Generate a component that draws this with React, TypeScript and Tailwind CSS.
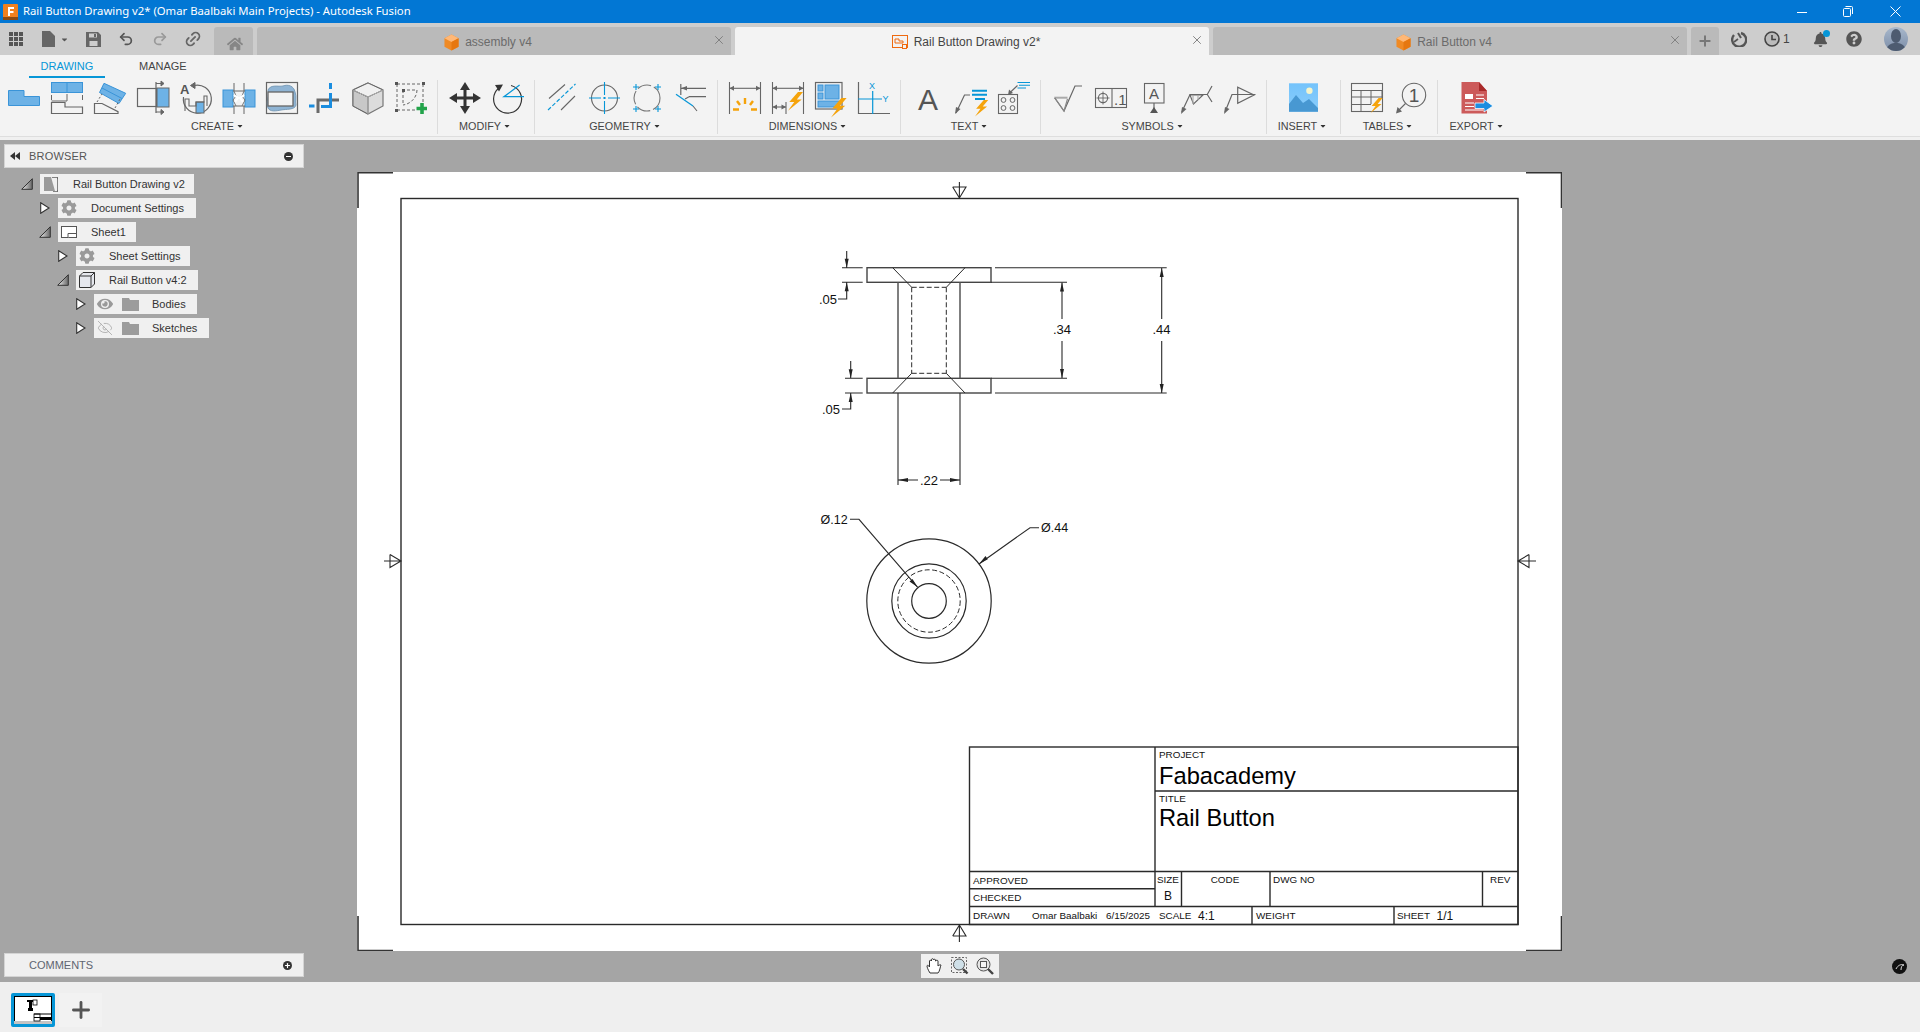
import React from "react";
import { Undo2, Redo2, Link2, EyeOff, X, Plus } from "lucide-react";
import { FaCog, FaEye, FaHome, FaBell, FaQuestionCircle, FaCaretDown } from "react-icons/fa";

const G = "#666";
const B = "#6db2e6";
const BL = "#0696d7";
const O = "#f5a30b";

function Bolt({ x, y, s = 1 }: { x: number; y: number; s?: number }) {
  return <polygon transform={`translate(${x} ${y}) scale(${s})`} points="8,0 1,8 5,8 0,15 11,6 7,6 12,0" fill={O} stroke="none" />;
}

function I({ children }: { children: React.ReactNode }) {
  return (
    <svg viewBox="0 0 32 32" className="w-8 h-8 shrink-0 overflow-visible" fill="none" stroke={G} strokeWidth="1">
      {children}
    </svg>
  );
}

const create = [
  <polygon key="" points="0.5,8.5 16,8.5 16,14.5 31.5,14.5 31.5,23.5 0.5,23.5" fill={B} stroke="#3a94d8" />,
  <g key="">
    <rect x="0.5" y="0.5" width="31" height="10" fill={B} stroke="#3a94d8" />
    <path d="M16 0.5V10.5" stroke="#3a94d8" />
    <path d="M0.5 13V18M16 12V19M31.5 13V18M0.5 19H16" />
    <path d="M0.5 20.5H14V25H31.5V31.5H0.5Z" strokeWidth="1.2" />
  </g>,
  <g key="">
    <polygon points="10,1.3 31.7,11.3 25,21.5 5.5,10.5" fill={B} stroke="#3a94d8" />
    <path d="M8 6 L28 16.5" stroke="#3a94d8" />
    <path d="M0.5 31.5V21.5H8L24 29.7V31.5Z" strokeWidth="1.2" />
    <path d="M3 20L8 12M21 26L26 17" strokeDasharray="2 2" />
  </g>,
  <g key="">
    <rect x="0.5" y="6.5" width="19" height="18" strokeWidth="1.2" />
    <rect x="20" y="6" width="12" height="19" fill={B} />
    <path d="M19 0V31M19 1.5H26M19 30H26" strokeWidth="1.2" />
    <path d="M24 -1L27 1.5L24 4ZM24 27.5L27 30L24 32.5Z" fill={G} />
  </g>,
  <g key="">
    <text x="0" y="12" fontSize="13" fontWeight="700" fill="#555" stroke="none" fontFamily="Liberation Sans">A</text>
    <path d="M14 3.5A14 14 0 1 1 3.5 15" strokeWidth="1.2" />
    <path d="M15 0.5L10.5 3.5L15 6.5Z" fill={G} />
    <rect x="16" y="20" width="8" height="11" fill={B} />
    <path d="M5 29V17H9V24H16V20H24V14H27V24" strokeWidth="1.1" />
  </g>,
  <g key="">
    <rect x="0" y="8" width="10" height="17" fill={B} stroke="#3a94d8" />
    <rect x="22" y="8" width="10" height="17" fill={B} stroke="#3a94d8" />
    <path d="M11 1V9M21 1V9M11 24V32M21 24V32" />
    <path d="M10 9H22M10 24H22" />
    <path d="M11 9L13 14L10 18L13 24M21 9L19 14L22 18L19 24" stroke="#777" />
    <path d="M11 13L15 16L12 20M21 13L17 16L20 20" stroke="#fff" strokeWidth="2" />
  </g>,
  <g key="">
    <rect x="0.5" y="0.5" width="31" height="31" strokeWidth="1.2" />
    <path d="M2 8C5 2 12 5 17 4C22 2 28 4 29 10C31 15 29 19 30 23C29 28 20 27 15 28C10 29 4 30 2 26C0 20 3 14 2 8Z" fill="#8fb4d4" stroke="#7a9cb8" />
    <rect x="2" y="10" width="25" height="14" fill="#f3f3f3" strokeWidth="1.3" />
  </g>,
  <g key="">
    <path d="M30 18H9V31" stroke="#6a6a6a" strokeWidth="3" />
    <path d="M21.5 1V7M21.5 11V24.5H12M0 24H5.5" stroke="#1a8ddf" strokeWidth="3" />
  </g>,
  <g key="">
    <polygon points="16,1 31,8 31,24 16,32 1,24 1,8" fill="#dcdcdc" stroke="#777" strokeWidth="1.2" />
    <polygon points="1,8 16,15 16,32 1,24" fill="#c8c8c8" />
    <polygon points="16,1 31,8 16,15 1,8" fill="#f0f0f0" />
    <path d="M1 8L16 15L31 8M16 15V32" stroke="#aaa" />
  </g>,
  <g key="">
    <path d="M2 2H28M2 2V28M2 28H22M28 2V20" strokeDasharray="3 2" strokeWidth="1" />
    <path d="M7 8H22M8 8V22M22 8C22 15 16 22 8 23" strokeDasharray="3 2" />
    <g fill="#555" stroke="none">
      <rect x="0" y="0" width="3" height="3" /><rect x="27" y="0" width="3" height="3" /><rect x="0" y="27" width="3" height="3" />
      <rect x="7" y="7" width="3" height="3" />
    </g>
    <path d="M27 21V32M21.5 26.5H32" stroke="#22a34a" strokeWidth="3.6" />
  </g>,
];

const modify = [
  <g key="">
    <path d="M16 4V28M4 16H28" stroke="#333" strokeWidth="3" />
    <path d="M16 0L21 8H11ZM16 32L21 24H11ZM0 16L8 11V21ZM32 16L24 11V21Z" fill="#333" stroke="none" />
  </g>,
  <g key="">
    <path d="M7 6A14 14 0 1 0 19 3.5" stroke="#333" strokeWidth="1.2" />
    <path d="M3 3L11 2.5L7 9.5Z" fill="#333" stroke="none" />
    <path d="M27.6 3L12 14.7H32" stroke={BL} strokeWidth="1.3" />
  </g>,
];

const geometry = [
  <g key="">
    <path d="M2 28L29.5 2" stroke={BL} strokeWidth="1.1" strokeDasharray="4 2" />
    <path d="M3 16.5L19 2.5M15 28L29 14" strokeWidth="1.1" />
  </g>,
  <g key="">
    <circle cx="15.5" cy="16" r="13" strokeWidth="1.1" />
    <path d="M15.5 0V13M15.5 15V17M15.5 19V32M0 16H12M14 16H17M19 16H31" stroke={BL} strokeWidth="1.1" />
  </g>,
  <g key="">
    <circle cx="15" cy="16" r="13" strokeDasharray="14 3" strokeWidth="1.1" stroke="#777" />
    <path d="M26 2V8M23 5H29M26 24V30M23 27H29M4 2V8M1 5H7M4 24V30M1 27H7" stroke={BL} strokeWidth="1.1" />
  </g>,
  <g key="">
    <path d="M6 6.3H31M14 14.7H31M5.8 2V13" strokeWidth="1.2" />
    <path d="M6 6.3L12 4V8.6Z" fill={G} stroke="none" />
    <path d="M1 12.3L18 24" stroke={BL} strokeWidth="1.2" />
    <path d="M14 14.7L10 17M18 24L22 29" strokeWidth="1.1" />
  </g>,
];

function Arrows({ y, x2 = 31.5 }: { y: number; x2?: number }) {
  return (
    <>
      <path d={`M0.5 ${y}H${x2}`} strokeWidth="1.1" />
      <path d={`M0.5 ${y}L5 ${y - 2.5}V${y + 2.5}ZM${x2} ${y}L${x2 - 4.5} ${y - 2.5}V${y + 2.5}Z`} fill={G} stroke="none" />
    </>
  );
}

const dimensions = [
  <g key="">
    <path d="M0.5 0V32M31.5 0V32" strokeWidth="1.1" />
    <Arrows y={6.3} />
    <path d="M16 16V22M8 19L11 23M24 19L21 23M4 27.5H10M22 27.5H28" stroke={O} strokeWidth="2.4" />
  </g>,
  <g key="">
    <path d="M0.5 0V32M31.5 0V32M14 20V32" strokeWidth="1.1" />
    <Arrows y={6.3} />
    <Arrows y={25} x2={14} />
    <Bolt x={16} y={10} s={1.25} />
  </g>,
  <g key="">
    <rect x="0.5" y="0.5" width="26.5" height="26.5" fill="#f3f3f3" strokeWidth="1.2" />
    <rect x="3" y="3" width="5" height="6" fill={B} stroke="#3a94d8" />
    <rect x="3" y="11" width="5" height="6" fill={B} stroke="#3a94d8" />
    <rect x="10" y="3" width="14" height="14" fill={B} stroke="#3a94d8" />
    <rect x="3" y="19" width="21" height="6" fill={B} stroke="#3a94d8" />
    <Bolt x={16} y={16} s={1.3} />
  </g>,
  <g key="">
    <path d="M0.5 0V31.5H32" strokeWidth="1.2" />
    <path d="M14.7 9V32M0 17H24" stroke={BL} strokeWidth="1.2" />
    <text x="11" y="7" fontSize="9" fill={BL} stroke="none" fontFamily="Liberation Sans">X</text>
    <text x="24.5" y="20" fontSize="9" fill={BL} stroke="none" fontFamily="Liberation Sans">Y</text>
  </g>,
];

const textIcons = [
  <text key="" x="16" y="27.5" textAnchor="middle" fontSize="30" fill="#555" stroke="none" fontFamily="Liberation Sans">A</text>,
  <g key="">
    <path d="M1 31L9.5 13H15" strokeWidth="1.2" />
    <path d="M0 32L1 25L5.5 27Z" fill={G} stroke="none" />
    <path d="M17 8.7H32M17 12.8H32M20 17H30" stroke={BL} strokeWidth="2" />
    <Bolt x={20} y={18} s={1.1} />
  </g>,
  <g key="">
    <rect x="0.5" y="12.5" width="19" height="19" strokeWidth="1.1" />
    <circle cx="5.5" cy="18" r="2.4" /><circle cx="14.5" cy="18" r="2.4" /><circle cx="5.5" cy="26" r="2.4" /><circle cx="14.5" cy="26" r="2.4" />
    <path d="M11.5 11L19.5 3.5" strokeWidth="1.1" />
    <path d="M10 13L11 7.5L15 11Z" fill={G} stroke="none" />
    <path d="M19.5 0.5H32M21 3.2H32M19.5 6H28" stroke={BL} strokeWidth="1.1" />
  </g>,
];

const symbols = [
  <g key="">
    <path d="M2.3 15.7H15.5" stroke="#aaa" strokeWidth="2" />
    <path d="M2.8 16L12 29L23 4H30" strokeWidth="1.2" />
    <path d="M2.8 16L12 29L15.5 17" stroke="#888" strokeWidth="1.2" />
  </g>,
  <g key="">
    <rect x="0.5" y="6.5" width="31" height="19" strokeWidth="1.1" />
    <path d="M17 6.5V25.5" strokeWidth="1.1" />
    <circle cx="8" cy="16" r="4.6" strokeWidth="1.1" />
    <path d="M8 9.5V22.5M1.5 16H14.5" strokeWidth="0.9" />
    <text x="19" y="23" fontSize="15" fill="#555" stroke="none" fontFamily="Liberation Sans">.1</text>
  </g>,
  <g key="">
    <rect x="6.5" y="1.5" width="19.5" height="19.5" strokeWidth="1.1" />
    <text x="16" y="17" textAnchor="middle" fontSize="15" fill="#555" stroke="none" fontFamily="Liberation Sans">A</text>
    <path d="M16 21V27" strokeWidth="1.2" />
    <path d="M16 25L20 31H12Z" fill="#555" stroke="none" />
  </g>,
  <g key="">
    <path d="M0.8 30L9 12.5H26.3L31 4M26.3 12.5L31 20" strokeWidth="1.2" />
    <path d="M0 32L1 25L5.5 27Z" fill={G} stroke="none" />
    <path d="M9 13L22 13L12.5 22Z" strokeWidth="1.1" />
    <path d="M12 13V22M17 13V18" strokeWidth="1.1" stroke="#aaa" />
  </g>,
  <g key="">
    <path d="M1 30L8 12.5H31.5" strokeWidth="1.2" />
    <path d="M0 32L1 25L5.5 27Z" fill={G} stroke="none" />
    <path d="M13.7 5.3V21.3L30 13Z" strokeWidth="1.2" />
  </g>,
];

const insert = [
  <g key="">
    <defs>
      <linearGradient id="sky" x1="0" y1="0" x2="0" y2="1">
        <stop offset="0" stopColor="#74c3fb" />
        <stop offset="1" stopColor="#8acdfb" />
      </linearGradient>
    </defs>
    <rect x="1" y="1.3" width="29" height="28.4" fill="url(#sky)" stroke="none" />
    <circle cx="21.4" cy="8.7" r="3.2" fill="#f4f4cc" stroke="none" />
    <path d="M1 22L8 13L15 21L21 17L30 26V29.7H1Z" fill="#4898d2" stroke="none" />
  </g>,
];

const tables = [
  <g key="">
    <rect x="0.5" y="1.5" width="31" height="28" strokeWidth="1.1" />
    <path d="M0.5 8.5H31.5M0.5 15H31.5M0.5 22.5H20M10 8.5V29.5M20 8.5V22M31 8.5V16" strokeWidth="1" />
    <Bolt x={19.6} y={16} s={1} />
  </g>,
  <g key="">
    <circle cx="20" cy="13" r="11.7" strokeWidth="1.1" />
    <text x="20" y="20" textAnchor="middle" fontSize="19" fill="#555" stroke="none" fontFamily="Liberation Sans">1</text>
    <path d="M11.5 21.5L4 29" strokeWidth="1.1" />
    <path d="M2 31.5L3.5 25L8 29.5Z" fill={G} stroke="none" />
  </g>,
];

const exportIcons = [
  <g key="">
    <polygon points="0.5,0 18,0 26,9 26,31.5 0.5,31.5" fill="#cc5a5a" stroke="none" />
    <polygon points="18,0 26,9 18,9" fill="#a92a2a" stroke="none" />
    <rect x="4" y="12" width="8" height="5" fill="#fff" stroke="none" />
    <path d="M15 13H23M15 16.5H23M4 21H13M4 24.5H13M4 28H22" stroke="#fff" strokeWidth="1.1" />
    <path d="M14 21H23V17.5L32 24L23 30V26.5H14Z" fill="#1b8de0" stroke="#fff" strokeWidth="0.8" />
  </g>,
];

function Group({ icons, label, w, pad, sep = true }: { icons: React.ReactNode[]; label: string; w: string; pad: string; sep?: boolean }) {
  return (
    <div className={`flex flex-col h-[54px] border-r shrink-0 ${sep ? "border-[#dcdcdc]" : "border-transparent"} ${w}`}>
      <div className={`flex gap-[11px] h-[32px] shrink-0 mt-[2px] ${pad}`}>
        {icons.map((ic, i) => (
          <I key={i}>{ic}</I>
        ))}
      </div>
      <div className="mt-[5px] -ml-[2px] flex items-center justify-center gap-[2px] text-[10.8px] leading-[14px] text-[#444]">
        {label}
        <FaCaretDown className="w-[8px] h-[8px] text-[#333]" />
      </div>
    </div>
  );
}

function Cube() {
  return (
    <svg viewBox="0 0 16 18" className="w-[15px] h-[17px] shrink-0">
      <polygon points="8,0.5 15.5,4.5 15.5,13.5 8,17.5 0.5,13.5 0.5,4.5" fill="#f08a24" />
      <polygon points="8,0.5 15.5,4.5 8,8.5 0.5,4.5" fill="#ffb877" />
      <polygon points="8,8.5 15.5,4.5 15.5,13.5 8,17.5" fill="#e67710" />
    </svg>
  );
}

function Tab({ icon, label, active, w }: { icon: React.ReactNode; label: string; active?: boolean; w: string }) {
  return (
    <div className={`relative flex items-center justify-center gap-[6px] h-[28px] rounded-t-[3px] text-[12px] pr-[12px] pt-[2px] ${w} ${active ? "bg-[#f3f3f3] text-[#444]" : "bg-[#bababa] text-[#6b6b6b]"}`}>
      {icon}
      <span>{label}</span>
      <X className="absolute right-[5px] top-[6px] w-[14px] h-[14px] text-[#7d7d7d]" strokeWidth={1.6} />
    </div>
  );
}

const T = { fontFamily: "Liberation Sans, sans-serif" };

function ArrowDown({ x, y }: { x: number; y: number }) {
  return <path d={`M${x} ${y}L${x - 2} ${y - 9}H${x + 2}Z`} fill="#222" stroke="none" />;
}
function ArrowUp({ x, y }: { x: number; y: number }) {
  return <path d={`M${x} ${y}L${x - 2} ${y + 9}H${x + 2}Z`} fill="#222" stroke="none" />;
}

function Sheet() {
  const small = { fontSize: 9.9, fill: "#111", stroke: "none", ...T } as const;
  return (
    <svg viewBox="357 172 1205 779" className="w-[1205px] h-[779px] block" fill="none" stroke="#2a2a2a" strokeWidth="1.2" style={T}>
      {/* corners */}
      <path d="M358 208V172.7H393M1526 172.7H1561.5V208M358 916V950.5H393M1526 950.5H1561.5V916" stroke="#333" strokeWidth="1.6" />
      <rect x="401" y="198.5" width="1117" height="726" strokeWidth="1.4" />

      {/* centring marks */}
      <g strokeWidth="1.1">
        <path d="M959.4 182V198M952.7 187L959.4 198L966 187H952.7" />
        <path d="M959.4 942V925M952.7 936L959.4 925L966 936H952.7" />
        <path d="M384 561H401M390 554.5L401 561L390 567.5V554.5" />
        <path d="M1536 561H1518M1529 554.5L1518 561L1529 567.5V554.5" />
      </g>

      {/* side view */}
      <rect x="867" y="267.7" width="124" height="14.6" stroke="#444" strokeWidth="1.4" />
      <rect x="867" y="378.3" width="124" height="14.7" stroke="#444" strokeWidth="1.4" />
      <path d="M898 282.3V378.3M960 282.3V378.3" strokeWidth="1.5" stroke="#555" />
      <path d="M911.7 287.3V373.3M946.3 287.3V373.3M911.7 287.3H946.3M911.7 373.3H946.3" strokeDasharray="5 2.5" strokeWidth="1" />
      <path d="M892.7 267.7L911.7 287.3M965 267.7L946.3 287.3M892.7 393L911.7 373.3M965 393L946.3 373.3" strokeWidth="1" />

      {/* dims */}
      <g strokeWidth="1.1">
        <path d="M995 267.7H1166.7M995 393H1166.7M991 282.3H1067M991 378.3H1067" />
        <path d="M1161.7 268V319M1161.7 341V393M1062 282.5V319M1062 341V378" />
        <path d="M842 267.7H862.7M842 282.3H862.7M846.7 251V267.7M846.7 282.3V299H838" />
        <path d="M845 378.3H862.7M845 393H862.7M850.7 361V378.3M850.7 393V409H842" />
        <path d="M898 393V485M960 393V485M898 480H918M940 480H960" />
      </g>
      <ArrowUp x={1161.7} y={268} />
      <ArrowDown x={1161.7} y={393} />
      <ArrowUp x={1062} y={282.5} />
      <ArrowDown x={1062} y={378} />
      <ArrowDown x={846.7} y={267.7} />
      <ArrowUp x={846.7} y={282.3} />
      <ArrowDown x={850.7} y={378.3} />
      <ArrowUp x={850.7} y={393} />
      <path d="M898 480L908 478V482ZM960 480L950 478V482Z" fill="#222" stroke="none" />
      <g fontSize="13" fill="#111" stroke="none">
        <text x="1161.5" y="334" textAnchor="middle">.44</text>
        <text x="1062" y="334" textAnchor="middle">.34</text>
        <text x="828" y="303.5" textAnchor="middle">.05</text>
        <text x="831" y="414" textAnchor="middle">.05</text>
        <text x="929" y="485" textAnchor="middle">.22</text>
      </g>

      {/* top view */}
      <circle cx="929" cy="601" r="62.2" />
      <circle cx="929" cy="601" r="37.2" />
      <circle cx="929" cy="601" r="31.2" strokeDasharray="5 2.5" strokeWidth="1" />
      <circle cx="929" cy="601" r="17.3" />
      <path d="M850 519.3H859L917.7 587.3M979 564L1030 527.7H1039" strokeWidth="1.1" />
      <path d="M917.7 587.3L909.5 581.5L912.5 578.9ZM979 564L985.5 556L987.8 559.2Z" fill="#222" stroke="none" />
      <g fontSize="12.5" fill="#111" stroke="none">
        <text x="820.5" y="524">Ø.12</text>
        <text x="1041" y="532">Ø.44</text>
      </g>

      {/* title block */}
      <g strokeWidth="1.4">
        <rect x="969.5" y="747" width="548.5" height="177.5" />
        <path d="M1155 747V906.5M969.5 871.5H1518M1155 791H1518M969.5 888.7H1155M969.5 906.5H1518M1181.5 871.5V906.5M1270 871.5V906.5M1482.5 871.5V906.5M1252 906.5V924.5M1394 906.5V924.5" />
      </g>
      <text x="1159" y="757.5" {...small}>PROJECT</text>
      <text x="1159" y="784" fontSize="23.7" fill="#000" stroke="none">Fabacademy</text>
      <text x="1159" y="801.5" {...small}>TITLE</text>
      <text x="1159" y="825.5" fontSize="23.7" fill="#000" stroke="none">Rail Button</text>
      <text x="973" y="884" {...small}>APPROVED</text>
      <text x="973" y="901" {...small}>CHECKED</text>
      <text x="973" y="919" {...small}>DRAWN</text>
      <text x="1032" y="919" {...small}>Omar Baalbaki</text>
      <text x="1106" y="919" {...small}>6/15/2025</text>
      <text x="1157" y="882.5" {...small}>SIZE</text>
      <text x="1164" y="900" fontSize="12" fill="#111" stroke="none">B</text>
      <text x="1225" y="882.5" textAnchor="middle" {...small}>CODE</text>
      <text x="1273" y="882.5" {...small}>DWG NO</text>
      <text x="1490" y="882.5" {...small}>REV</text>
      <text x="1159" y="919" {...small}>SCALE</text>
      <text x="1198" y="920" fontSize="12" fill="#111" stroke="none">4:1</text>
      <text x="1256" y="919" {...small}>WEIGHT</text>
      <text x="1397" y="919" {...small}>SHEET</text>
      <text x="1436.5" y="920" fontSize="12" fill="#111" stroke="none">1/1</text>
    </svg>
  );
}

function Collapse() {
  return (
    <svg viewBox="0 0 12 12" className="w-3 h-3 ml-[1px]">
      <defs>
        <linearGradient id="tri" x1="0" y1="0" x2="1" y2="0">
          <stop offset="0" stopColor="#eee" />
          <stop offset="1" stopColor="#666" />
        </linearGradient>
      </defs>
      <polygon points="0.7,11.3 11.3,0.7 11.3,11.3" fill="url(#tri)" stroke="#333" strokeWidth="1" />
    </svg>
  );
}
function Expand() {
  return (
    <svg viewBox="0 0 10 12" className="w-[10px] h-3 ml-[2px]">
      <polygon points="0.7,0.7 9,6 0.7,11.3" fill="#fff" stroke="#333" strokeWidth="1.1" />
    </svg>
  );
}
function Folder() {
  return (
    <svg viewBox="0 0 17 13" className="w-[17px] h-[13px] shrink-0">
      <path d="M0 0H7L8 2H17V13H0Z" fill="#9c9c9c" />
    </svg>
  );
}

const Gear = () => <FaCog className="w-4 h-4 text-[#9a9a9a] shrink-0" />;

type Row = { pl: string; open: boolean; w: string; gap: string; icon: React.ReactNode; label: string };
const rows: Row[] = [
  {
    pl: "pl-[20px]", open: true, w: "w-[154px]", gap: "gap-[14px] pl-[4px]", label: "Rail Button Drawing v2",
    icon: (
      <svg viewBox="0 0 15 15" className="w-[15px] h-[15px] shrink-0">
        <polygon points="0,0 7,0 11,14 0,14" fill="#9a9a9a" />
        <path d="M8 0.5H13.5V14.5H9M13.5 0V2M13.5 13V15" stroke="#666" fill="none" strokeWidth="0.8" />
      </svg>
    ),
  },
  { pl: "pl-[38px]", open: false, w: "w-[138px]", gap: "gap-[14px] pl-[3px]", label: "Document Settings", icon: <Gear /> },
  {
    pl: "pl-[38px]", open: true, w: "w-[78px]", gap: "gap-[14px] pl-[3px]", label: "Sheet1",
    icon: (
      <svg viewBox="0 0 16 12" className="w-4 h-3 shrink-0" fill="#fff" stroke="#555">
        <rect x="0.5" y="0.5" width="15" height="11" />
        <path d="M7 11.5V7.5H15.5" />
      </svg>
    ),
  },
  { pl: "pl-[56px]", open: false, w: "w-[114px]", gap: "gap-[14px] pl-[3px]", label: "Sheet Settings", icon: <Gear /> },
  {
    pl: "pl-[56px]", open: true, w: "w-[122px]", gap: "gap-[14px] pl-[3px]", label: "Rail Button v4:2",
    icon: (
      <svg viewBox="0 0 16 16" className="w-4 h-4 shrink-0" fill="#e6e8ee" stroke="#333">
        <path d="M0.5 4L4 0.5H15.5V12L12 15.5H0.5Z" />
        <path d="M0.5 4H12V15.5M12 4L15.5 0.5" />
      </svg>
    ),
  },
  {
    pl: "pl-[74px]", open: false, w: "w-[103px]", gap: "gap-[13px] pl-[3px]", label: "Bodies",
    icon: (
      <div className="flex items-center gap-[9px]">
        <FaEye className="w-4 h-4 text-[#9a9a9a] shrink-0" />
        <Folder />
      </div>
    ),
  },
  {
    pl: "pl-[74px]", open: false, w: "w-[115px]", gap: "gap-[13px] pl-[3px]", label: "Sketches",
    icon: (
      <div className="flex items-center gap-[9px]">
        <EyeOff className="w-4 h-4 text-[#aaa] shrink-0" strokeWidth={1.3} />
        <Folder />
      </div>
    ),
  },
];

export default function App() {
  return (
    <div className="flex flex-col w-[1920px] h-[1032px] overflow-hidden" style={T}>
      {/* title bar */}
      <div className="flex items-center h-[23px] bg-[#0277d4] text-white shrink-0">
        <svg viewBox="0 0 15 16" className="w-[15px] h-4 ml-[3px] shrink-0">
          <rect width="15" height="16" rx="1" fill="#f0801e" />
          <rect y="13" width="15" height="3" fill="#8a4a12" />
          <path d="M5 3H11V5H7V7H10.5V9H7V12H5Z" fill="#fff" />
        </svg>
        <span className="ml-[5px] text-[11.3px]" style={{ fontFamily: "Noto Sans, sans-serif" }}>
          Rail Button Drawing v2* (Omar Baalbaki Main Projects) - Autodesk Fusion
        </span>
        <div className="ml-auto flex items-center gap-[36px] pr-[19px]">
          <svg viewBox="0 0 10 10" className="w-[10px] h-[10px]" stroke="#fff" fill="none"><path d="M0 5.5H10" /></svg>
          <svg viewBox="0 0 10 11" className="w-[10px] h-[11px]" stroke="#fff" fill="none"><rect x="0.5" y="2.5" width="7" height="8" rx="1" /><path d="M2.5 0.5H8.5Q9.5 0.5 9.5 1.5V8" /></svg>
          <svg viewBox="0 0 11 11" className="w-[11px] h-[11px] ml-[1px]" stroke="#fff" fill="none"><path d="M0.5 0.5L10.5 10.5M10.5 0.5L0.5 10.5" /></svg>
        </div>
      </div>

      {/* tab row */}
      <div className="flex items-end h-[32px] bg-[#cdcdcd] shrink-0">
        <div className="flex items-center h-[32px] w-[214px] shrink-0 text-[#555] pl-[9px]">
          <svg viewBox="0 0 14 14" className="w-[14px] h-[14px] shrink-0" fill="#555">
            <rect width="4" height="4" /><rect x="5" width="4" height="4" /><rect x="10" width="4" height="4" />
            <rect y="5" width="4" height="4" /><rect x="5" y="5" width="4" height="4" /><rect x="10" y="5" width="4" height="4" />
            <rect y="10" width="4" height="4" /><rect x="5" y="10" width="4" height="4" /><rect x="10" y="10" width="4" height="4" />
          </svg>
          <svg viewBox="0 0 13 16" className="w-[13px] h-4 ml-[19px] shrink-0" fill="#666"><path d="M0 0H8L13 5V16H0Z" /></svg>
          <FaCaretDown className="w-[9px] h-[9px] ml-[5px] text-[#555]" />
          <svg viewBox="0 0 15 15" className="w-[15px] h-[15px] ml-[17px] shrink-0" fill="#666"><path fillRule="evenodd" d="M0 0H12L15 3V15H0ZM3 1.5V5.5H11V1.5ZM3.5 9V14H11.5V9ZM8 2H10V5H8Z" /></svg>
          <Undo2 className="w-[16px] h-[16px] ml-[17px] shrink-0 text-[#555]" strokeWidth={2.6} />
          <Redo2 className="w-[16px] h-[16px] ml-[18px] shrink-0 text-[#999]" strokeWidth={2.6} />
          <Link2 className="w-[18px] h-[18px] ml-[16px] shrink-0 text-[#666] -rotate-45" strokeWidth={2.4} />
        </div>
        <div className="flex items-center justify-center w-[39px] h-[28px] ml-0 bg-[#bababa] rounded-t-[3px] shrink-0 pl-[3px] pt-[1px]">
          <FaHome className="w-4 h-4 text-[#868686] mt-[4px]" />
        </div>
        <div className="flex gap-[4px] ml-[4px]">
          <Tab w="w-[474px]" icon={<Cube />} label="assembly v4" />
          <Tab
            w="w-[474px]" active label="Rail Button Drawing v2*"
            icon={
              <svg viewBox="0 0 16 14" className="w-4 h-[14px] shrink-0" fill="none" stroke="#ef6a10" strokeWidth="1">
                <rect x="0.5" y="0.5" width="15" height="12" />
                <path d="M3 4H7V6H11V8H3Z" />
                <rect x="10.5" y="9.5" width="4" height="4" fill="#f3f3f3" />
              </svg>
            }
          />
          <Tab w="w-[474px]" icon={<Cube />} label="Rail Button v4" />
        </div>
        <div className="flex items-center justify-center w-[28px] h-[28px] ml-[4px] bg-[#bababa] rounded-t-[3px]">
          <Plus className="w-[16px] h-[16px] text-[#777]" strokeWidth={3} />
        </div>
        <div className="flex items-center h-[32px] ml-[12px] text-[#555]">
          <svg viewBox="0 0 16 16" className="w-4 h-4 shrink-0" fill="none" stroke="#555" strokeWidth="2.4">
            <path d="M10 2A7 7 0 1 1 3 4" /><path d="M7 2L10 7" strokeWidth="2" /><path d="M3 11L7 8" strokeWidth="1.6" />
          </svg>
          <svg viewBox="0 0 16 16" className="w-4 h-4 ml-[17px] shrink-0" fill="#bbb" stroke="#444" strokeWidth="1.6">
            <circle cx="8" cy="8" r="7" /><path d="M8 4V8.5H12" fill="none" />
          </svg>
          <span className="ml-[3px] text-[12px] text-[#444]">1</span>
          <div className="relative ml-[23px]">
            <FaBell className="w-[15px] h-[15px] text-[#555]" />
            <span className="absolute -top-[2px] -right-[2px] w-[7px] h-[7px] rounded-full bg-[#0696d7]" />
          </div>
          <FaQuestionCircle className="w-4 h-4 ml-[18px] text-[#555]" />
          <div className="w-6 h-6 ml-[22px] rounded-full bg-gradient-to-b from-[#a8b8cc] to-[#7d8ea8] overflow-hidden">
            <svg viewBox="0 0 24 24" className="w-6 h-6" fill="#4d5b70">
              <ellipse cx="12" cy="9" rx="5" ry="7" />
              <path d="M2 24C3 17 8 16 12 16S21 17 22 24Z" />
            </svg>
          </div>
        </div>
      </div>

      {/* toolbar */}
      <div className="h-[82px] bg-[#f3f3f3] border-b border-[#dedede] shrink-0">
        <div className="flex items-start h-[25px] text-[11px] leading-[22px]">
          <div className="ml-[29px] w-[76px] h-[23px] text-center text-[#0696d7] border-b-[2px] border-[#0696d7]">DRAWING</div>
          <div className="ml-[34px] text-[#444]">MANAGE</div>
        </div>
        <div className="flex h-[56px]">
          <Group icons={create} label="CREATE" w="w-[438px]" pad="pl-[8px]" />
          <Group icons={modify} label="MODIFY" w="w-[97px]" pad="pl-[11px]" />
          <Group icons={geometry} label="GEOMETRY" w="w-[183px]" pad="pl-[11px]" />
          <Group icons={dimensions} label="DIMENSIONS" w="w-[183px]" pad="pl-[11px]" />
          <Group icons={textIcons} label="TEXT" w="w-[140px]" pad="pl-[11px]" />
          <Group icons={symbols} label="SYMBOLS" w="w-[226px]" pad="pl-[11px]" />
          <Group icons={insert} label="INSERT" w="w-[74px]" pad="pl-[21px]" />
          <Group icons={tables} label="TABLES" w="w-[97px]" pad="pl-[10px]" />
          <Group icons={exportIcons} label="EXPORT" w="w-[80px]" pad="pl-[23px]" sep={false} />
        </div>
      </div>
      <div className="h-[3px] bg-[#f0f0f0] shrink-0" />

      {/* canvas */}
      <div className="relative flex-1 bg-[#a5a5a5] pl-[357px] pt-[32px] min-h-0">
        <div className="w-[1205px] h-[779px] bg-white">
          <Sheet />
        </div>

        {/* browser */}
        <div className="absolute left-[4px] top-[4px] w-[300px]">
          <div className="flex items-center h-[24px] bg-[#f0f0f0] border border-[#d4d4d4] pl-[5px] pr-[10px] text-[11px] text-[#555]">
            <svg viewBox="0 0 10 8" className="w-[10px] h-2" fill="#333"><path d="M5 0V8L0 4ZM10 0V8L5 4Z" /></svg>
            <span className="ml-[9px] tracking-[0.2px]">BROWSER</span>
            <span className="ml-auto w-[9px] h-[9px] rounded-full bg-[#333] flex items-center justify-center">
              <span className="w-[5px] h-[1px] bg-white" />
            </span>
          </div>
          <div className="flex flex-col gap-[4px] mt-[6px] -ml-[4px]">
            {rows.map((r) => (
              <div key={r.label} className={`flex items-center ${r.pl}`}>
                <div className="w-[20px] flex items-center shrink-0">{r.open ? <Collapse /> : <Expand />}</div>
                <div className={`flex items-center h-[20px] bg-[#f0f0f0] text-[11px] text-[#333] ${r.w} ${r.gap}`}>
                  {r.icon}
                  <span className="whitespace-nowrap">{r.label}</span>
                </div>
              </div>
            ))}
          </div>
        </div>

        {/* comments */}
        <div className="absolute left-[4px] bottom-[5px] flex items-center w-[300px] h-[24px] bg-[#f0f0f0] border border-[#d4d4d4] pl-[24px] pr-[11px] text-[11px] text-[#5f6570]">
          <span>COMMENTS</span>
          <span className="ml-auto w-[9px] h-[9px] rounded-full bg-[#333] flex items-center justify-center text-white">
            <Plus className="w-[7px] h-[7px]" strokeWidth={4} />
          </span>
        </div>

        {/* navigation bar */}
        <div className="absolute left-[921px] top-[814px] flex items-center justify-center gap-[7px] w-[78px] h-[24px] bg-[#f0f0f0]">
          <svg viewBox="0 0 18 18" className="w-[18px] h-[18px]" fill="#fff" stroke="#333" strokeWidth="1">
            <path d="M4 16C2 13 1 10 1 9C1 8 2.5 8 3.5 10V4C3.5 3 5 3 5.5 4V2.5C5.5 1.5 7.5 1.5 7.5 2.5V3C7.5 2 9.5 2 9.5 3V4C10 3 12 3 12 4V9C13 8 14.5 7.5 15 8C14 10 14 14 12 16Z" />
          </svg>
          <svg viewBox="0 0 18 18" className="w-[18px] h-[18px]" fill="none">
            <rect x="0.5" y="0.5" width="15" height="15" stroke="#666" strokeDasharray="2 1.5" />
            <circle cx="8" cy="7.5" r="5.5" fill="#cfe0e8" stroke="#555" />
            <path d="M12 12L16.5 16.5" stroke="#444" strokeWidth="2.4" />
          </svg>
          <svg viewBox="0 0 18 18" className="w-[18px] h-[18px]" fill="none">
            <circle cx="7.5" cy="7.5" r="6.5" fill="#e4e4e4" stroke="#555" />
            <rect x="4.5" y="4.5" width="6" height="6" fill="#f4f4f4" stroke="#555" />
            <path d="M12 12L17 17" stroke="#444" strokeWidth="2.4" />
          </svg>
        </div>

        {/* corner badge */}
        <div className="absolute right-[13px] bottom-[8px] w-[15px] h-[15px] rounded-full bg-[#111] flex items-center justify-center">
          <svg viewBox="0 0 10 10" className="w-[10px] h-[10px]" fill="none" stroke="#ddd" strokeWidth="1"><path d="M1 7C3 3 6 2 9 3C7 3 6 5 6 8" /></svg>
        </div>
      </div>

      {/* sheet strip */}
      <div className="flex items-center h-[50px] bg-[#efefef] shrink-0 pl-[11px] pt-[5px]">
        <div className="w-[44px] h-[34px] border-[3px] border-[#0696d7] rounded-[2px] bg-white shrink-0">
          <svg viewBox="0 0 38 28" className="w-[38px] h-[28px]" fill="#000">
            <rect x="0" y="0" width="38" height="1" />
            <rect x="0" y="0" width="1" height="25" />
            <rect x="37" y="0" width="1" height="25" />
            <rect x="0" y="25" width="38" height="3" fill="#c4c4c4" />
            <rect x="13" y="4" width="6" height="2" />
            <rect x="15" y="6" width="3" height="6" />
            <rect x="14" y="12" width="5" height="3" />
            <rect x="19" y="4" width="4" height="5" fill="none" stroke="#000" strokeWidth="0.8" />
            <rect x="20" y="21" width="17" height="1" />
            <rect x="20" y="17.5" width="17" height="1" />
            <rect x="20" y="18" width="6" height="7" fill="none" stroke="#000" strokeWidth="0.8" />
            <rect x="26" y="21" width="11" height="3" />
          </svg>
        </div>
        <div className="flex items-center justify-center w-[43px] h-[34px] ml-[4px] bg-[#f2f2f2]">
          <Plus className="w-[26px] h-[26px] text-[#555]" strokeWidth={2.6} />
        </div>
      </div>
    </div>
  );
}
